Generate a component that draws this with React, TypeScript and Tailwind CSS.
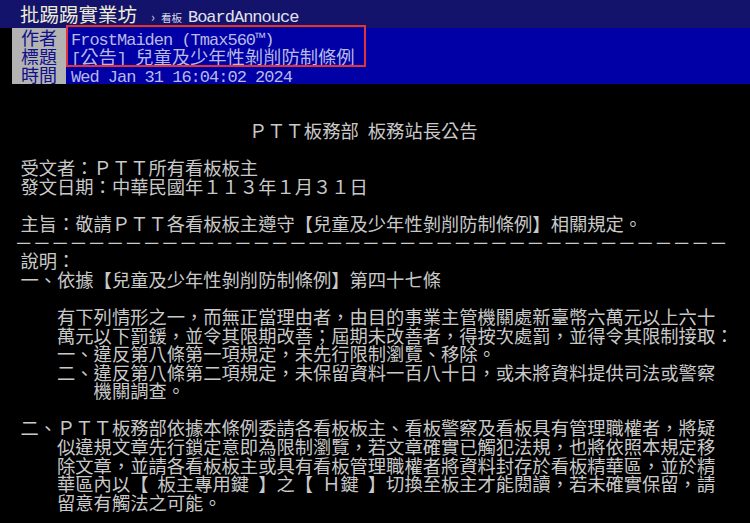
const BODY: string[] = [
  '',
  '',
  '　　　　　　　　　　　　 ＰＴＴ板務部 板務站長公告',
  '',
  '受文者：ＰＴＴ所有看板板主',
  '發文日期：中華民國年１１３年１月３１日',
  '',
  '主旨：敬請ＰＴＴ各看板板主遵守【兒童及少年性剝削防制條例】相關規定。',
  '---',
  '說明：',
  '一、依據【兒童及少年性剝削防制條例】第四十七條',
  '',
  '　　有下列情形之一，而無正當理由者，由目的事業主管機關處新臺幣六萬元以上六十',
  '　　萬元以下罰鍰，並令其限期改善；屆期未改善者，得按次處罰，並得令其限制接取：',
  '　　一、違反第八條第一項規定，未先行限制瀏覽、移除。',
  '　　二、違反第八條第二項規定，未保留資料一百八十日，或未將資料提供司法或警察',
  '　　　　機關調查。',
  '',
  '二、ＰＴＴ板務部依據本條例委請各看板板主、看板警察及看板具有管理職權者，將疑',
  '　　似違規文章先行鎖定意即為限制瀏覽，若文章確實已觸犯法規，也將依照本規定移',
  '　　除文章，並請各看板板主或具有看板管理職權者將資料封存於看板精華區，並於精',
  '　　華區內以【 板主專用鍵 】之【 Ｈ鍵 】切換至板主才能閱讀，若未確實保留，請',
  '　　留意有觸法之可能。',
];

// half-width space, one half of a cell
function Half() {
  return <span className="inline-block w-[0.5em]" />;
}

function Mono({ children }: { children: string }) {
  return (
    <span className="font-['Liberation_Mono',monospace] text-[17px] tracking-[-1px]">{children}</span>
  );
}

function TextLine({ text }: { text: string }) {
  if (text === '---') {
    return <div className="-ml-[6px] h-[18.6px] whitespace-pre">{'－'.repeat(39)}</div>;
  }
  const parts = text.split(' ');
  return (
    <div className="h-[18.6px] whitespace-pre">
      {parts.map((p, i) => (
        <span key={i}>
          {i > 0 && <Half />}
          {p}
        </span>
      ))}
    </div>
  );
}

function MetaRow({ tag, children }: { tag: string; children: React.ReactNode }) {
  return (
    <div className="flex h-[18.6px] leading-[18.6px]">
      <div className="ml-[12px] bg-[#b3b3b3] px-[9px] text-[18px] text-[#10108a]">{tag}</div>
      <div className="flex-1 whitespace-pre bg-[#0000a6] pl-[5px] text-[18.3px] text-[#b9b9e6]">{children}</div>
    </div>
  );
}

export default function App() {
  return (
    <div className="relative h-[523px] w-[750px] overflow-hidden bg-black font-['Noto_Sans_CJK_TC','Noto_Sans_CJK_JP',sans-serif]">
      <div className="h-[28px] whitespace-nowrap bg-[#13136b] pl-[20px] leading-[28px]">
        <span className="text-[19.5px] text-[#eeecd6]">批踢踢實業坊</span>
        <span className="ml-[14px] text-[13px] text-[#c8c8dc]">›</span>
        <span className="ml-[6px] text-[10.5px] text-[#d6d6e6]">看板</span>
        <span className="ml-[6px] text-[#e2e2ec]">
          <Mono>BoardAnnouce</Mono>
        </span>
      </div>

      <MetaRow tag="作者">
        <Mono>FrostMaiden (Tmax560™)</Mono>
      </MetaRow>
      <MetaRow tag="標題">
        <Mono>[</Mono>公告<Mono>] </Mono>兒童及少年性剝削防制條例
      </MetaRow>
      <MetaRow tag="時間">
        <Mono>Wed Jan 31 16:04:02 2024</Mono>
      </MetaRow>

      <div className="pl-[20.5px] text-[18.3px] leading-[18.6px] text-[#c9c9c9]">
        {BODY.map((t, i) => (
          <TextLine key={i} text={t} />
        ))}
      </div>

      <div className="absolute left-[66px] top-[25px] h-[42px] w-[300px] border-2 border-[#e2323c]" />
    </div>
  );
}
